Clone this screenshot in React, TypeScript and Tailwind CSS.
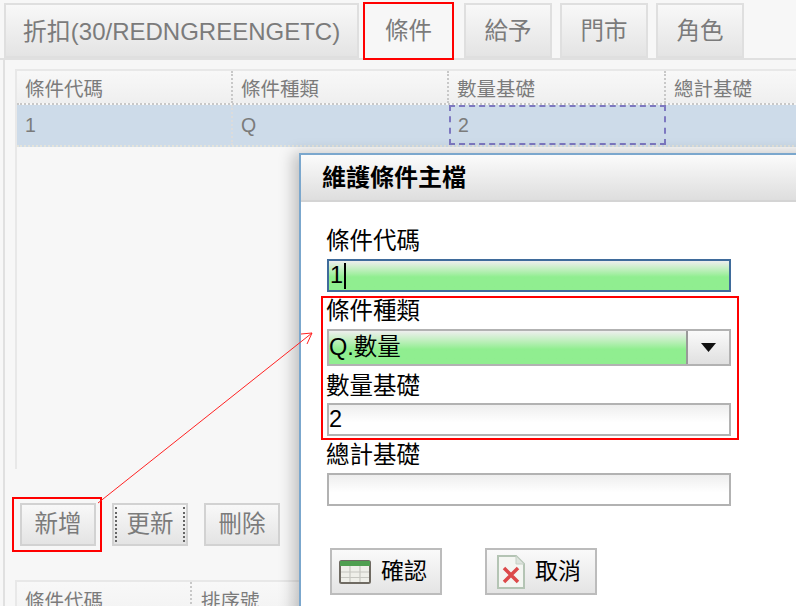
import React from 'react';

const FONT = "font-['Liberation_Sans','Noto_Sans_CJK_TC',sans-serif]";

const TABS = [
  { label: '給予', width: 'w-[88px]' },
  { label: '門市', width: 'w-[88px]' },
  { label: '角色', width: 'w-[88px]' },
];

function Tabs() {
  return (
    <div className="flex h-[60px] items-start border-b-2 border-[#e0e0e0] pl-[4px] pt-[3px]">
      <div className="flex h-[55px] w-[355px] items-center justify-center border-2 border-[#dfdfdf] bg-gradient-to-b from-[#f8f8f8] to-[#e4e4e4] pt-[2px] text-[24px] text-[#7b7b7b]">
        折扣(30/REDNGREENGETC)
      </div>
      <div className="ml-[6px] flex h-[55px] w-[87px] items-center justify-center bg-[#f7f7f7] pt-[3px] text-[23.5px] text-[#7b7b7b]">
        條件
      </div>
      {TABS.map((t, i) => (
        <div
          key={t.label}
          className={`${t.width} ${i === 0 ? 'ml-[12px]' : 'ml-[8px]'} flex h-[55px] items-center justify-center border-2 border-[#dfdfdf] bg-gradient-to-b from-[#f8f8f8] to-[#e4e4e4] pt-[2px] text-[23.5px] text-[#7b7b7b]`}
        >
          {t.label}
        </div>
      ))}
    </div>
  );
}

function HeaderCell({ width, children }: { width: string; children: React.ReactNode }) {
  return (
    <div className={`${width} flex h-full shrink-0 items-center border-r-2 border-dotted border-[#c8c8c8] pl-[8px] pt-[5px]`}>
      {children}
    </div>
  );
}

function TopGrid() {
  return (
    <div className="h-[400px] w-[800px] border-2 border-b-0 border-[#e8e8e8] text-[19.5px] text-[#7b7b7b]">
      <div className="flex h-[34px] border-b-2 border-dotted border-[#c8c8c8] bg-gradient-to-b from-[#f8f8f8] to-[#efefef]">
        <HeaderCell width="w-[216px]">條件代碼</HeaderCell>
        <HeaderCell width="w-[216px]">條件種類</HeaderCell>
        <HeaderCell width="w-[217px]">數量基礎</HeaderCell>
        <div className="flex items-center pl-[8px] pt-[5px]">總計基礎</div>
      </div>
      <div className="flex h-[42px] border-b-2 border-dotted border-[#e4e4dc] bg-[#cddbe9]">
        <div className="flex w-[216px] shrink-0 items-center border-r-2 border-dotted border-[#dcdcdc] pl-[8px] pt-[2px]">1</div>
        <div className="flex w-[216px] shrink-0 items-center pl-[8px] pt-[2px]">Q</div>
        <div className="flex w-[217px] shrink-0 items-center border-2 border-dashed border-[#7d78c0] pl-[7px] pt-[2px]">2</div>
      </div>
    </div>
  );
}

function ActionButton({ label, dotted }: { label: string; dotted?: boolean }) {
  return (
    <div className="flex h-[43px] w-[76px] items-center justify-center border-2 border-[#d2d2d2] bg-gradient-to-b from-[#f8f8f8] to-[#e4e4e4] text-[23.5px] text-[#7b7b7b]">
      {dotted ? (
        <div className="flex h-[35px] w-[70px] items-center justify-center border-x-2 border-dotted border-[#666]">{label}</div>
      ) : (
        label
      )}
    </div>
  );
}

function BottomGrid() {
  return (
    <div className="mt-[34px] flex h-[40px] w-[800px] border-t-2 border-l-2 border-[#e8e8e8] bg-gradient-to-b from-[#f8f8f8] to-[#f2f2f2] text-[19.5px] text-[#7b7b7b]">
      <div className="flex w-[175px] shrink-0 items-start border-r-2 border-dotted border-[#c8c8c8] pl-[8px] pt-[5px]">條件代碼</div>
      <div className="pl-[9px] pt-[5px]">排序號</div>
    </div>
  );
}

function FieldLabel({ children, className }: { children: React.ReactNode; className: string }) {
  return <div className={`${className} pl-[25px] text-[23.5px] leading-[28px] text-black`}>{children}</div>;
}

function TableIcon() {
  return (
    <svg width="32" height="24" viewBox="0 0 32 24">
      <rect x="1" y="1" width="30" height="22" rx="1.5" fill="#efefe9" stroke="#6f6a62" strokeWidth="2" />
      <rect x="1" y="1" width="30" height="5" fill="#4f9f4f" />
      <path d="M2 12h28M2 17.500h28M11 6v16M21 6v16" stroke="#c6c6c0" strokeWidth="1.200" fill="none" />
    </svg>
  );
}

function CancelIcon() {
  return (
    <svg width="28" height="34" viewBox="0 0 28 34">
      <path d="M1 1h18l8 8v24H1z" fill="#f4f6f2" stroke="#b4c4b4" strokeWidth="2" />
      <path d="M19 1v8h8z" fill="#dde4dd" stroke="#c4d0c4" strokeWidth="1" />
      <path d="M7 13l14 14M21 13L7 27" stroke="#dc4a4a" strokeWidth="3.500" fill="none" />
    </svg>
  );
}

function DialogButton({ icon, label, iconBox }: { icon: React.ReactNode; label: string; iconBox: string }) {
  return (
    <div className="flex h-[47px] w-[112px] items-center border-2 border-[#bcbcbc] bg-gradient-to-b from-[#fafafa] to-[#e4e4e4]">
      <div className={iconBox}>{icon}</div>
      <span className="text-[23px] text-black">{label}</span>
    </div>
  );
}

function Dialog() {
  return (
    <div className="absolute left-[299px] top-[153px] h-[500px] w-[560px] border-2 border-[#7ba7cd] bg-white shadow-[-6px_0_14px_rgba(0,0,0,0.22)]">
      <div className="flex h-[47px] items-center border-b-2 border-[#d4d4d4] bg-gradient-to-b from-[#fbfbfb] to-[#dedede] pl-[21px] pt-[1px] text-[24px] font-bold text-black">
        維護條件主檔
      </div>

      <FieldLabel className="mt-[25px]">條件代碼</FieldLabel>
      <div className="ml-[26px] mt-[4px] flex h-[33px] w-[404px] items-center border-2 border-[#3f6b9b] bg-gradient-to-b from-[#eeeeee] via-[#90ee90] via-[55%] to-[#90ee90] pl-[1px] text-[23.5px] text-black">
        1<span className="ml-[1px] h-[26px] w-[2px] bg-black" />
      </div>

      <FieldLabel className="mt-[5px]">條件種類</FieldLabel>
      <div className="ml-[26px] mt-[4px] flex h-[37px] w-[404px] border-2 border-[#b2b2b2] text-[23.5px] text-black">
        <div className="flex flex-1 items-center bg-gradient-to-b from-[#eeeeee] via-[#90ee90] via-[55%] to-[#90ee90]">Q.數量</div>
        <div className="flex w-[43px] items-center justify-center border-l-2 border-[#999] bg-gradient-to-b from-[#fafafa] to-[#e0e0e0]">
          <svg width="15" height="9" viewBox="0 0 15 9"><path d="M0 0h15L7.500 9z" fill="#111" /></svg>
        </div>
      </div>

      <FieldLabel className="mt-[6px]">數量基礎</FieldLabel>
      <div className="ml-[26px] mt-[3px] flex h-[33px] w-[404px] items-center border-2 border-[#b2b2b2] bg-gradient-to-b from-[#eeeeee] via-white via-[60%] to-white text-[23.5px] text-black">
        2
      </div>

      <FieldLabel className="mt-[5px]">總計基礎</FieldLabel>
      <div className="ml-[26px] mt-[4px] h-[33px] w-[404px] border-2 border-[#b2b2b2] bg-gradient-to-b from-[#eeeeee] via-white via-[60%] to-white" />

      <div className="ml-[29px] mt-[42px] flex gap-[43px]">
        <DialogButton icon={<TableIcon />} label="確認" iconBox="ml-[7px] mr-[10px] flex" />
        <DialogButton icon={<CancelIcon />} label="取消" iconBox="ml-[10px] mr-[10px] flex" />
      </div>
    </div>
  );
}

function RedBox({ className }: { className: string }) {
  return <div className={`absolute border-2 border-[#ff0000] ${className}`} />;
}

export default function App() {
  return (
    <div className={`relative h-[606px] w-[796px] overflow-hidden bg-[#f7f7f7] ${FONT}`}>
      <Tabs />
      <div className="ml-[3px] h-[546px] border-l-2 border-[#e0e0e0] pl-[10px] pt-[9px]">
        <TopGrid />
        <div className="ml-[5px] mt-[34px] flex gap-[16px]">
          <ActionButton label="新增" />
          <ActionButton label="更新" dotted />
          <ActionButton label="刪除" />
        </div>
        <BottomGrid />
      </div>

      <Dialog />

      <RedBox className="left-[363px] top-[2px] h-[58px] w-[91px]" />
      <RedBox className="left-[12px] top-[497px] h-[55px] w-[90px]" />
      <RedBox className="left-[321px] top-[296px] h-[144px] w-[418px]" />
      <svg className="absolute left-0 top-0" width="796" height="606" viewBox="0 0 796 606">
        <path d="M98 503L312 333M301 334L312 333M307 344L312 333" stroke="#f22" strokeWidth="1" fill="none" />
      </svg>
    </div>
  );
}
